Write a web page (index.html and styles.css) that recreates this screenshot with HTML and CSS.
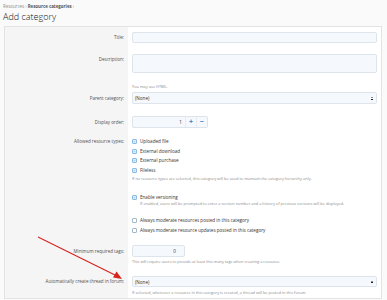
FILE: index.html
```html
<!DOCTYPE html>
<html lang="en">
<head>
    <meta charset="UTF-8">
    <meta name="viewport" content="width=device-width, initial-scale=1.0">
    <title>Add category</title>
    <link rel="stylesheet" href="styles.css">
</head>
<body>
    <div class="breadcrumb">
        <a href="#">Resources</a> <span class="sep">›</span>
        <a href="#" class="current">Resource categories</a> <span class="sep">›</span>
    </div>
    <h1>Add category</h1>

    <form class="block">
        <div class="row row-title">
            <label class="row-label">Title:</label>
            <div class="row-ctrl"><input type="text" class="input"></div>
        </div>

        <div class="row row-desc">
            <label class="row-label">Description:</label>
            <div class="row-ctrl">
                <textarea class="input textarea"></textarea>
                <div class="help help-desc">You may use HTML.</div>
            </div>
        </div>

        <div class="row row-parent">
            <label class="row-label">Parent category:</label>
            <div class="row-ctrl">
                <div class="input select"><span>(None)</span><span class="arrows"></span></div>
            </div>
        </div>

        <div class="row row-order">
            <label class="row-label">Display order:</label>
            <div class="row-ctrl">
                <div class="number">
                    <span class="number-value">1</span>
                    <span class="number-btn">+</span>
                    <span class="number-btn">−</span>
                </div>
            </div>
        </div>

        <div class="row row-types">
            <label class="row-label">Allowed resource types:</label>
            <div class="row-ctrl">
                <ul class="checks">
                    <li><span class="box checked"></span>Uploaded file</li>
                    <li><span class="box checked"></span>External download</li>
                    <li><span class="box checked"></span>External purchase</li>
                    <li><span class="box checked"></span>Fileless</li>
                </ul>
                <div class="help">If no resource types are selected, this category will be used to maintain the category hierarchy only.</div>
            </div>
        </div>

        <div class="row row-version">
            <span class="row-label"></span>
            <div class="row-ctrl">
                <div class="check-line"><span class="box checked"></span>Enable versioning</div>
                <div class="help help-indent">If enabled, users will be prompted to enter a version number and a history of previous versions will be displayed.</div>
            </div>
        </div>

        <div class="row row-moderate">
            <span class="row-label"></span>
            <div class="row-ctrl">
                <ul class="checks checks-wide">
                    <li><span class="box"></span>Always moderate resources posted in this category</li>
                    <li><span class="box"></span>Always moderate resource updates posted in this category</li>
                </ul>
            </div>
        </div>

        <div class="row row-tags">
            <label class="row-label">Minimum required tags:</label>
            <div class="row-ctrl">
                <div class="input tags-input">0</div>
                <div class="help help-tags">This will require users to provide at least this many tags when creating a resource.</div>
            </div>
        </div>

        <div class="row row-thread">
            <label class="row-label">Automatically create thread in forum:</label>
            <div class="row-ctrl">
                <div class="input select"><span>(None)</span><span class="arrows"></span></div>
                <div class="help help-thread">If selected, whenever a resource in this category is created, a thread will be posted in this forum.</div>
            </div>
        </div>
    </form>

    <svg class="annotation" width="387" height="300" viewBox="0 0 387 300">
        <line x1="38" y1="237" x2="117" y2="276" stroke="#d9231d" stroke-width="1.1"/>
        <polygon points="122,279 113,277.5 116.5,271.5" fill="#d9231d"/>
    </svg>
</body>
</html>
```

FILE: styles.css
```css
body {
    margin: 0;
    background-color: #fafafa;
    font-family: 'Open Sans', 'Noto Sans', sans-serif;
    color: #2b2b2b;
    position: relative;
    height: 300px;
    overflow: hidden;
}
.breadcrumb {
    padding: 3px 0 0 3px;
    font-size: 4.4px;
    line-height: 6px;
    color: #8c8c8c;
}
.breadcrumb a {
    color: #8c8c8c;
    text-decoration: none;
}
.breadcrumb a.current {
    color: #555;
    font-weight: bold;
}
h1 {
    margin: 2px 0 3px 3px;
    font-size: 9px;
    line-height: 12px;
    font-weight: 300;
    color: #141414;
}
.block {
    margin-left: 4px;
    width: 378px;
    box-sizing: border-box;
    border: 1px solid #e3e3e3;
    background: linear-gradient(to right, #f5f5f5 123px, #ffffff 123px);
    padding-bottom: 2px;
}
.row {
    display: grid;
    grid-template-columns: 123px 1fr;
}
.row-label {
    text-align: right;
    padding-right: 4px;
    font-size: 4.5px;
    color: #505050;
    line-height: 11px;
}
.row-ctrl {
    padding: 0 4px;
    font-size: 4.6px;
}
.input {
    display: block;
    box-sizing: border-box;
    width: 100%;
    height: 11px;
    margin: 0;
    padding: 0 2px;
    background-color: #f5f9fd;
    border: 1px solid #dde4ec;
    border-radius: 2px;
    font-family: inherit;
    font-size: 4.6px;
    color: #333;
}
.textarea {
    height: 19px;
    resize: none;
}
.select {
    height: 12px;
    display: flex;
    align-items: center;
    justify-content: space-between;
}
.arrows {
    width: 2px;
    height: 4px;
    margin-right: 1px;
    background:
        linear-gradient(to bottom right, transparent 50%, #222 50%) 0 0 / 1px 1.5px no-repeat,
        linear-gradient(to bottom left, transparent 50%, #222 50%) 1px 0 / 1px 1.5px no-repeat,
        linear-gradient(to top right, transparent 50%, #222 50%) 0 2.5px / 1px 1.5px no-repeat,
        linear-gradient(to top left, transparent 50%, #222 50%) 1px 2.5px / 1px 1.5px no-repeat;
}
.help {
    font-size: 3.9px;
    line-height: 6px;
    color: #8a8a8a;
    white-space: nowrap;
}
.help-indent {
    padding-left: 8px;
    line-height: 5px;
}

/* row spacing */
.row-title { padding-top: 5px; }
.row-desc { padding-top: 11px; }
.help-desc { margin-top: 11px; }
.row-parent { padding-top: 2px; }
.row-parent .row-label { line-height: 12px; }
.row-order { padding-top: 12px; }
.row-order .row-label { line-height: 12px; }
.row-types { padding-top: 9px; }
.row-types .row-label { line-height: 9.5px; }
.row-types .help { margin-top: 1px; }
.row-version { padding-top: 11px; }
.row-moderate { padding-top: 9px; }
.row-tags { padding-top: 10px; }
.row-tags .row-label { line-height: 12px; }
.help-tags { margin-top: 2px; }
.row-thread { padding-top: 11px; }
.row-thread .select { height: 11px; }
.help-thread { margin-top: 3px; }

.number {
    display: flex;
    width: 76px;
    height: 12px;
    box-sizing: border-box;
    background-color: #f5f9fd;
    border: 1px solid #dde4ec;
    border-radius: 2px;
}
.number-value {
    width: 49px;
    text-align: right;
    padding-right: 3px;
    line-height: 10px;
    color: #333;
    border-right: 1px solid #e6ebf1;
}
.number-btn {
    flex: 1;
    text-align: center;
    line-height: 10px;
    font-size: 7px;
    font-weight: bold;
    color: #2f7fc7;
}
.number-btn + .number-btn {
    border-left: 1px solid #e6ebf1;
}
.tags-input {
    width: 53px;
    height: 12px;
    text-align: right;
    padding-right: 8px;
    line-height: 10px;
}

.checks {
    list-style: none;
    margin: 0;
    padding: 0;
}
.checks li, .check-line {
    display: flex;
    align-items: center;
    line-height: 9.5px;
    color: #333;
}
.check-line {
    line-height: 8px;
}
.checks-wide li {
    line-height: 10px;
}
.box {
    width: 5px;
    height: 5px;
    box-sizing: border-box;
    margin-right: 3px;
    border: 1px solid #a5b8ca;
    border-radius: 1px;
    background-color: #fff;
    flex: none;
}
.box.checked {
    border-color: #8bbbe4;
    background: #e6f0fa url("data:image/svg+xml,%3Csvg xmlns='http://www.w3.org/2000/svg' viewBox='0 0 10 10'%3E%3Cpolyline points='2.2,5.2 4.2,7 7.8,3' fill='none' stroke='%233a86c8' stroke-width='1.3'/%3E%3C/svg%3E") center / 100% 100% no-repeat;
}

.annotation {
    position: absolute;
    top: 0;
    left: 0;
    pointer-events: none;
}
```
